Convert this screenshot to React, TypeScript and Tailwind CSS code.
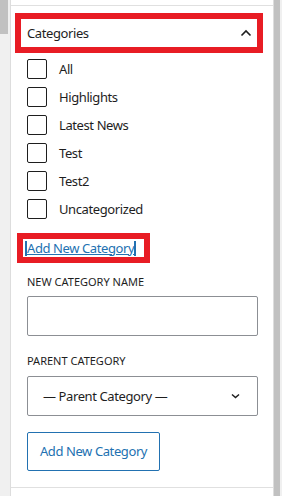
import React from "react";

const items = ["All", "Highlights", "Latest News", "Test", "Test2", "Uncategorized"];

export default function App() {
  return (
    <div
      className="w-[282px] h-[496px] flex bg-[#f0f0f0] overflow-hidden text-[#1e1e1e]"
      style={{ fontFamily: '"Noto Sans", "Open Sans", sans-serif' }}
    >
      <div className="w-[10px] shrink-0">
        <div className="w-[8px] h-[34px] bg-[#c1c1c1]" />
      </div>
      <div className="w-[264px] shrink-0 bg-white border-x border-[#dddddd] flex flex-col">
        <div className="h-[6px] border-b border-[#e0e0e0]" />
        <div className="mt-[7px] ml-[4px] w-[248px] border-[6px] border-[#e81c24]">
          <div className="h-[28px] flex items-center justify-between pl-[6px] pr-[5px]">
            <span className="text-[13px] leading-none tracking-[-0.4px]">Categories</span>
            <svg width="12" height="8" viewBox="0 0 12 8" fill="none">
              <path d="M1.5 6.5 L6 2 L10.5 6.5" stroke="#1e1e1e" strokeWidth="1.6" />
            </svg>
          </div>
        </div>
        <div className="mt-[6px] pl-[16px] flex flex-col gap-[8px]">
          {items.map((it) => (
            <div key={it} className="flex items-center gap-[12px] h-[20px]">
              <div className="w-[20px] h-[20px] border border-[#1e1e1e] rounded-[2px] shrink-0" />
              <span className="text-[13px] leading-none tracking-[-0.4px]">{it}</span>
            </div>
          ))}
        </div>
        <div className="mt-[14px] ml-[6px] w-[133px] border-[6px] border-[#e81c24]">
          <div className="h-[18px] flex items-center pl-[2px]">
            <span className="w-[2px] h-[15px] bg-[#2271b1]" />
            <span className="text-[13px] leading-none text-[#2271b1] underline tracking-[-0.4px]">Add New Category</span>
            <span className="w-[2px] h-[15px] bg-[#2271b1]" />
          </div>
        </div>
        <div className="pl-[16px] pr-[15px] mt-[13px] flex flex-col">
          <div className="text-[11px] leading-none uppercase h-[11px]">New Category Name</div>
          <div className="mt-[9px] h-[40px] border border-[#8c8f94] rounded-[2px]" />
          <div className="mt-[19px] text-[11px] leading-none uppercase h-[11px]">Parent Category</div>
          <div className="mt-[10px] h-[40px] border border-[#8c8f94] rounded-[2px] flex items-center justify-between pl-[15px] pr-[17px]">
            <span className="text-[13px] leading-none tracking-[-0.4px]">— Parent Category —</span>
            <svg width="9" height="6" viewBox="0 0 9 6" fill="none">
              <path d="M1 1.5 L4.5 4.5 L8 1.5" stroke="#1e1e1e" strokeWidth="1.5" />
            </svg>
          </div>
          <div className="mt-[16px] w-[133px] h-[39px] border border-[#2271b1] rounded-[2px] flex items-center justify-center text-[13px] text-[#2271b1] tracking-[-0.4px]">
            Add New Category
          </div>
        </div>
        <div className="mt-[16px] border-t border-[#e0e0e0]" />
      </div>
      <div className="w-[6px] shrink-0 bg-[#c1c1c1]" />
    </div>
  );
}
